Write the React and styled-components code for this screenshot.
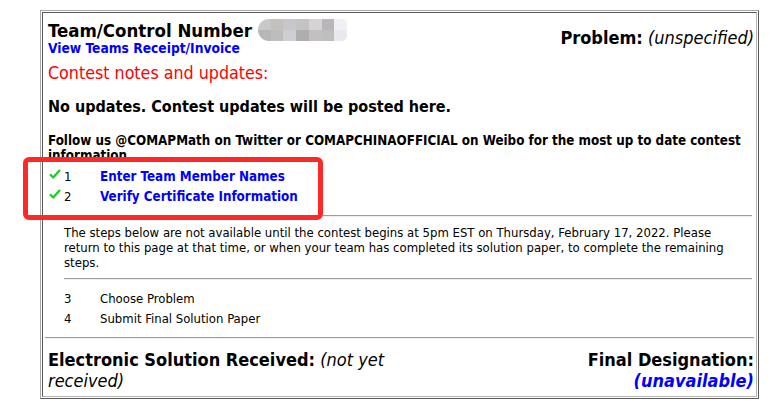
import React from "react";
import styled, { createGlobalStyle } from "styled-components";

const Global = createGlobalStyle`
  html, body { margin: 0; padding: 0; background: #fff; }
  body {
    font-family: "DejaVu Sans Condensed", "DejaVu Sans", sans-serif;
    font-stretch: condensed;
    color: #000;
  }
`;

const Page = styled.div`
  position: relative;
  width: 780px;
  height: 416px;
  padding: 10px 0 0 40px;
  box-sizing: border-box;
`;

const Frame = styled.div`
  width: 719px;
  box-sizing: border-box;
  border: 1px solid;
  border-color: #a8a8a8 #5a5a5a #5a5a5a #a8a8a8;
  padding: 1px;
`;

const Cell = styled.div`
  border: 1px solid;
  border-color: #5a5a5a #b4b4b4 #b4b4b4 #5a5a5a;
  padding: 6px 2px 5px 2px;
`;

const Header = styled.div`
  display: flex;
  align-items: center;
  justify-content: space-between;
  padding: 0 0 0 3px;
`;

const TitleBlock = styled.div`
  display: flex;
  flex-direction: column;
`;

const Title = styled.div`
  font-size: 18.5px;
  font-weight: 700;
  line-height: 21px;
  display: flex;
  align-items: center;
`;

const Redacted = styled.span`
  display: inline-grid;
  grid-template-columns: repeat(7, 1fr);
  grid-template-rows: 1fr 1fr;
  width: 89px;
  height: 22px;
  margin-left: 6px;
  border-radius: 11px 5px 5px 11px;
  overflow: hidden;
  filter: blur(0.4px);
`;

const Tile = styled.span`
  background: ${(p) => p.$c};
`;

const Link = styled.a`
  font-size: 13.7px;
  font-weight: 700;
  line-height: 15px;
  color: #0000ff;
  text-decoration: none;
`;

const Label = styled.span`
  font-weight: 700;
`;

const Value = styled.span`
  font-style: italic;
  font-weight: ${(p) => (p.$bold ? 700 : 400)};
  color: ${(p) => p.$color || "#000"};
`;

const ProblemLine = styled.div`
  font-size: 18px;
  line-height: 21px;
  text-align: right;
`;

const Body = styled.div`
  padding: 0 0 0 3px;
`;

const NotesHeading = styled.div`
  margin-top: 7px;
  font-size: 17.7px;
  line-height: 20px;
  color: #ff0000;
`;

const Updates = styled.div`
  margin-top: 14px;
  font-size: 16px;
  font-weight: 700;
  line-height: 20px;
`;

const Follow = styled.div`
  margin-top: 16px;
  font-size: 13.3px;
  font-weight: 700;
  line-height: 15px;
`;

const StepList = styled.div`
  margin-top: ${(p) => p.$top}px;
  display: flex;
  flex-direction: column;
`;

const StepRow = styled.div`
  display: grid;
  grid-template-columns: 16px 36px auto;
  align-items: center;
  height: 20px;
  line-height: 20px;
`;

const Check = styled.span`
  display: flex;
  align-items: center;
  padding-left: 1px;
  margin-top: -6px;
`;

const StepNum = styled.span`
  font-size: 13px;
`;

const StepName = styled.span`
  font-size: ${(p) => (p.$done ? 13.3 : 13)}px;
  font-weight: ${(p) => (p.$done ? 700 : 400)};
  color: ${(p) => (p.$done ? "#0000ff" : "#000")};
`;

const Indented = styled.div`
  margin-left: 16px;
  margin-right: 2px;
`;

const Rule = styled.hr`
  margin: ${(p) => p.$top}px 0 0 0;
  border: 0;
  border-top: 1px solid #9c9c9c;
  border-bottom: 1px solid #eeeeee;
  height: 0;
`;

const Notice = styled.p`
  margin: 8px 10px 0 0;
  font-size: 13px;
  line-height: 15px;
`;

const Footer = styled.div`
  margin-top: 10px;
  display: grid;
  grid-template-columns: 1fr 1fr;
  font-size: 18px;
  line-height: 21px;
  padding: 0 0 0 3px;
`;

const FooterLeft = styled.div`
  padding-right: 10px;
`;

const FooterRight = styled.div`
  text-align: right;
  display: flex;
  flex-direction: column;
`;

const Annotation = styled.div`
  position: absolute;
  left: 23px;
  top: 157px;
  width: 300px;
  height: 63px;
  box-sizing: border-box;
  border: 5px solid #ff2828;
  border-radius: 6px;
  pointer-events: none;
`;

const tiles = [
  "#c8c8c8", "#c3c0be", "#c6c6cb", "#c4c2c2", "#d6d4d2", "#b8b6bb", "#f0f0f4",
  "#b8b6b6", "#bebcbc", "#cfcfd3", "#b0adae", "#c2c0c0", "#bfbdbd", "#e8e9ef",
];

const CheckIcon = () => (
  <svg width="12" height="10" viewBox="0 0 12 10">
    <path d="M1 5.2 L4.2 8.6 L11 1" fill="none" stroke="#19d019" strokeWidth="2.2" strokeLinejoin="round" />
  </svg>
);

const doneSteps = [
  { n: 1, name: "Enter Team Member Names" },
  { n: 2, name: "Verify Certificate Information" },
];
const laterSteps = [
  { n: 3, name: "Choose Problem" },
  { n: 4, name: "Submit Final Solution Paper" },
];

export default function App() {
  return (
    <>
      <Global />
      <Page>
        <Frame>
          <Cell>
            <Header>
              <TitleBlock>
                <Title>
                  Team/Control Number
                  <Redacted>
                    {tiles.map((c, i) => (
                      <Tile key={i} $c={c} />
                    ))}
                  </Redacted>
                </Title>
                <Link href="#">View Teams Receipt/Invoice</Link>
              </TitleBlock>
              <ProblemLine>
                <Label>Problem:</Label> <Value>(unspecified)</Value>
              </ProblemLine>
            </Header>
            <Body>
              <NotesHeading>Contest notes and updates:</NotesHeading>
              <Updates>No updates. Contest updates will be posted here.</Updates>
              <Follow>
                Follow us @COMAPMath on Twitter or COMAPCHINAOFFICIAL on Weibo for the most up to date contest information
              </Follow>
              <StepList $top={4}>
                {doneSteps.map((s) => (
                  <StepRow key={s.n}>
                    <Check>
                      <CheckIcon />
                    </Check>
                    <StepNum>{s.n}</StepNum>
                    <StepName $done>{s.name}</StepName>
                  </StepRow>
                ))}
              </StepList>
              <Indented>
                <Rule $top={8} />
                <Notice>
                  The steps below are not available until the contest begins at 5pm EST on Thursday, February 17, 2022. Please return to this page at that time, or when your team has completed its solution paper, to complete the remaining steps.
                </Notice>
                <Rule $top={8} />
              </Indented>
              <StepList $top={9}>
                {laterSteps.map((s) => (
                  <StepRow key={s.n}>
                    <span />
                    <StepNum>{s.n}</StepNum>
                    <StepName>{s.name}</StepName>
                  </StepRow>
                ))}
              </StepList>
            </Body>
            <Rule $top={8} />
            <Footer>
              <FooterLeft>
                <Label>Electronic Solution Received:</Label> <Value>(not yet received)</Value>
              </FooterLeft>
              <FooterRight>
                <Label>Final Designation:</Label>
                <Value $bold $color="#0000ff">(unavailable)</Value>
              </FooterRight>
            </Footer>
          </Cell>
        </Frame>
        <Annotation />
      </Page>
    </>
  );
}
